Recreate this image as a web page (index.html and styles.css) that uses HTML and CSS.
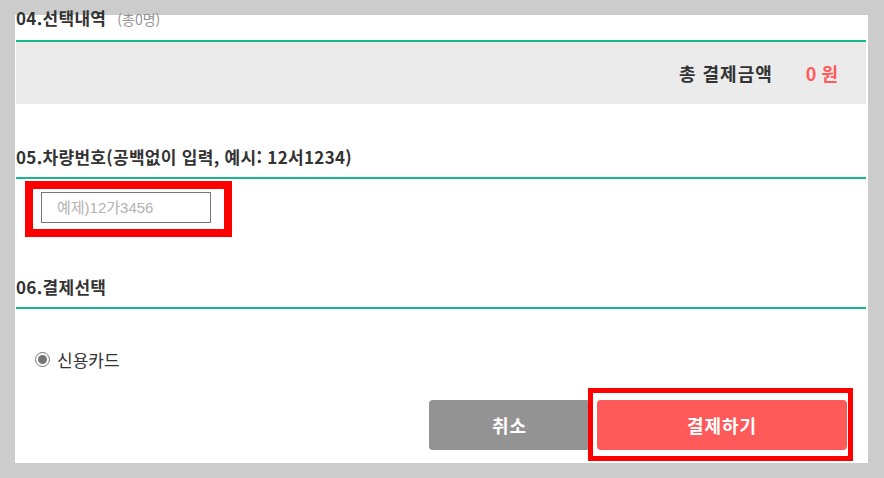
FILE: index.html
```html
<!DOCTYPE html>
<html lang="ko">
<head>
<meta charset="utf-8">
<link rel="stylesheet" href="styles.css">
</head>
<body>
<div class="panel">
  <div class="title title-first">04.선택내역 <span class="count">(총0명)</span></div>
  <div class="total">
    <span class="total-label">총 결제금액</span>
    <span class="total-value">0 원</span>
  </div>

  <div class="title title-car">05.차량번호(공백없이 입력, 예시: 12서1234)</div>
  <div class="mark-input">
    <input class="car-input" type="text" placeholder="예제)12가3456">
  </div>

  <div class="title title-pay">06.결제선택</div>
  <label class="radio-row">
    <span class="radio"><span class="radio-dot"></span></span>
    <span class="radio-text">신용카드</span>
  </label>

  <div class="actions">
    <button class="btn btn-cancel">취소</button>
    <div class="pay-wrap">
      <button class="btn btn-pay">결제하기</button>
      <span class="mark-frame"></span>
    </div>
  </div>
</div>
</body>
</html>
```

FILE: styles.css
```css
html, body {
  margin: 0;
  padding: 0;
}
body {
  background: #cccccc;
  font-family: "Noto Sans CJK KR", "Noto Sans", sans-serif;
  color: #333333;
  width: 884px;
  height: 478px;
  overflow: hidden;
}
.panel {
  display: flow-root;
  margin: 15px 16px 0 15px;
  height: 448px;
  background: #ffffff;
  padding: 0 2px 0 1px;
  box-sizing: border-box;
}
.title {
  font-size: 17px;
  font-weight: 700;
  line-height: 24px;
  letter-spacing: 0.3px;
  padding-bottom: 8px;
  border-bottom: 2px solid #14b98c;
  white-space: nowrap;
}
.title-first {
  margin-top: -9px;
  padding-bottom: 9px;
}
.count {
  font-size: 14px;
  font-weight: 400;
  color: #929292;
  margin-left: 6px;
  letter-spacing: 0;
}
.total {
  height: 62px;
  background: #ebebeb;
  display: flex;
  align-items: center;
  justify-content: flex-end;
  padding-right: 28px;
}
.total-label {
  font-size: 18px;
  font-weight: 700;
  color: #333333;
  letter-spacing: 1px;
}
.total-value {
  font-size: 18px;
  font-weight: 700;
  color: #ff5a5a;
  margin-left: 33px;
}
.title-car {
  margin-top: 41px;
}
.mark-input {
  display: inline-block;
  margin: 2px 0 0 9px;
  border: 8px solid #ff0000;
  padding: 3px 13px 6px 8px;
}
.car-input {
  display: block;
  width: 170px;
  height: 31px;
  box-sizing: border-box;
  border: 1px solid #767676;
  padding: 0 0 0 15px;
  margin: 0;
  font-family: "Liberation Sans", "Noto Sans CJK KR", sans-serif;
  font-size: 15px;
  color: #333333;
  outline: none;
}
.car-input::placeholder {
  color: #b2b2b2;
}
.title-pay {
  margin-top: 38px;
}
.radio-row {
  display: flex;
  align-items: center;
  height: 24px;
  margin-top: 38px;
  padding-left: 19px;
}
.radio {
  width: 15px;
  height: 15px;
  border: 1px solid #767676;
  border-radius: 50%;
  box-sizing: border-box;
  display: flex;
  align-items: center;
  justify-content: center;
  background: #ffffff;
}
.radio-dot {
  width: 9px;
  height: 9px;
  border-radius: 50%;
  background: #767676;
}
.radio-text {
  font-size: 17px;
  margin-left: 7px;
  color: #333333;
}
.actions {
  display: flex;
  justify-content: flex-end;
  gap: 7px;
  margin-top: 29px;
  padding-right: 19px;
}
.btn {
  height: 50px;
  border: none;
  border-radius: 4px;
  color: #ffffff;
  font-family: "Noto Sans CJK KR", "Noto Sans", sans-serif;
  font-size: 18px;
  font-weight: 700;
  padding: 0;
  margin: 0;
  letter-spacing: 1px;
}
.btn-cancel {
  width: 161px;
  background: #939393;
}
.pay-wrap {
  position: relative;
  display: flex;
}
.btn-pay {
  width: 250px;
  background: #ff5a5a;
}
.mark-frame {
  position: absolute;
  top: -12px;
  left: -9px;
  right: -6px;
  bottom: -11px;
  border: 5px solid #ff0000;
  pointer-events: none;
}
```
